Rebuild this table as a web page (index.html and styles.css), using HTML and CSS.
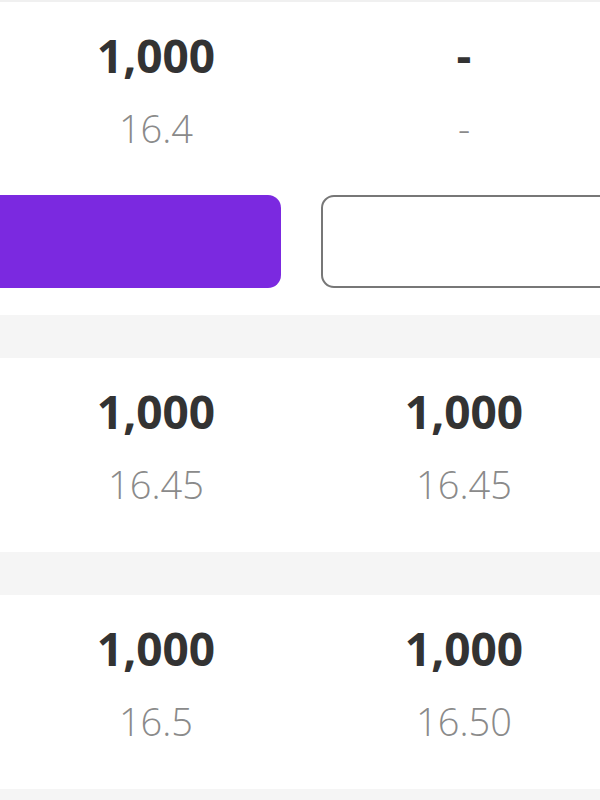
FILE: index.html
```html
<!DOCTYPE html>
<html>
<head>
<meta charset="utf-8">
<link rel="stylesheet" href="styles.css">
</head>
<body>
<div class="page">
  <section class="quote first">
    <div class="cols">
      <div class="cell">
        <div class="qty">1,000</div>
        <div class="price">16.4</div>
      </div>
      <div class="cell">
        <div class="qty">-</div>
        <div class="price">-</div>
      </div>
    </div>
    <div class="actions">
      <div class="btn btn-primary"></div>
      <div class="btn btn-outline"></div>
    </div>
  </section>
  <div class="band"></div>
  <section class="quote">
    <div class="cols">
      <div class="cell">
        <div class="qty">1,000</div>
        <div class="price">16.45</div>
      </div>
      <div class="cell">
        <div class="qty">1,000</div>
        <div class="price">16.45</div>
      </div>
    </div>
  </section>
  <div class="band"></div>
  <section class="quote">
    <div class="cols">
      <div class="cell">
        <div class="qty">1,000</div>
        <div class="price">16.5</div>
      </div>
      <div class="cell">
        <div class="qty">1,000</div>
        <div class="price">16.50</div>
      </div>
    </div>
  </section>
  <div class="band"></div>
</div>
</body>
</html>
```

FILE: styles.css
```css
html, body {
  margin: 0;
  padding: 0;
  background: #ffffff;
}
body {
  width: 600px;
  height: 800px;
  overflow: hidden;
  font-family: "Open Sans", "Noto Sans", sans-serif;
}
.page {
  border-top: 2px solid #f0f0f0;
}
.quote {
  padding: 26px 0 45px;
}
.quote.first {
  padding-bottom: 27px;
}
.cols {
  display: grid;
  grid-template-columns: 312px 304px;
  width: 616px;
}
.cell {
  display: flex;
  flex-direction: column;
  align-items: center;
}
.qty {
  font-size: 46px;
  line-height: 54px;
  font-weight: 700;
  color: #333333;
}
.price {
  margin-top: 23px;
  font-size: 38px;
  line-height: 46px;
  font-weight: 300;
  color: #8a8a8a;
}
.actions {
  display: grid;
  grid-template-columns: 301px 300px;
  column-gap: 40px;
  margin-left: -20px;
  margin-top: 44px;
}
.btn {
  height: 93px;
  box-sizing: border-box;
  border-radius: 13px;
}
.btn-primary {
  background: #7b29e0;
}
.btn-outline {
  border: 2px solid #777777;
  background: #ffffff;
}
.band {
  height: 43px;
  background: #f5f5f5;
}
```
